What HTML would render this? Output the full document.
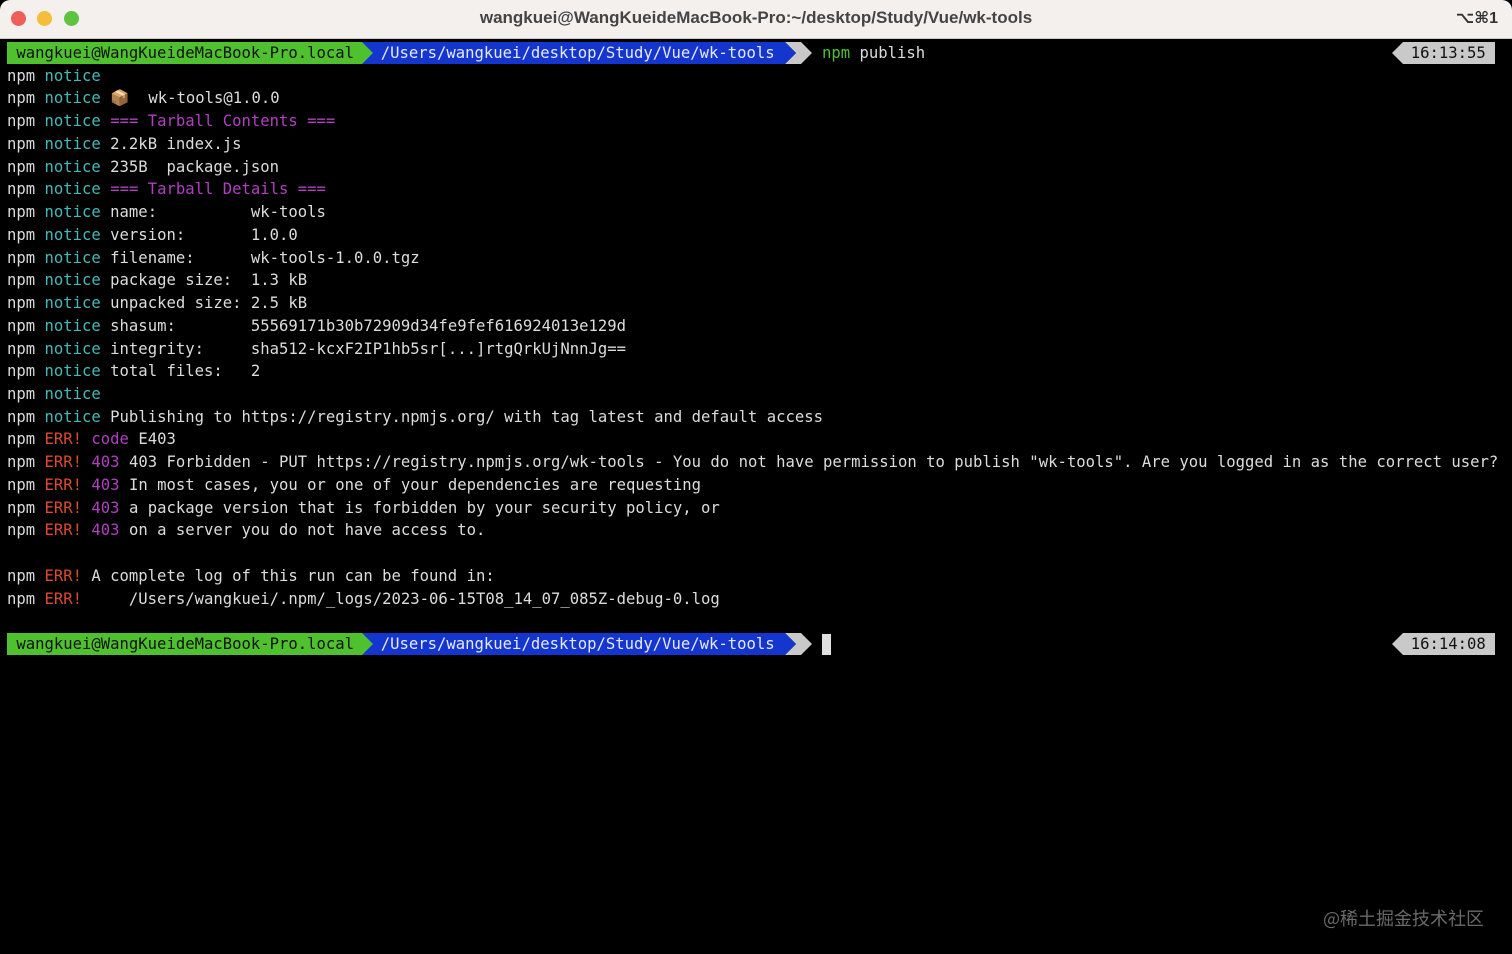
<!DOCTYPE html>
<html><head><meta charset="utf-8"><style>
html,body{margin:0;padding:0;}
body{width:1512px;height:954px;background:#000;position:relative;overflow:hidden;font-family:"DejaVu Sans Mono","Liberation Mono",monospace;}
.title{position:absolute;left:0;top:0;width:1512px;height:38px;background:#f3f0ed;border-bottom:1px solid #d0ccc8;border-radius:10px 10px 0 0;}
.tl{position:absolute;top:11px;width:15px;height:15px;border-radius:50%;}
.tt{position:absolute;left:0;width:1512px;top:8px;text-align:center;font:bold 17px "Liberation Sans",sans-serif;color:#444;}
.kb{position:absolute;right:14px;top:8px;font:bold 16px "Liberation Sans","DejaVu Sans",sans-serif;color:#333;}
pre{position:absolute;left:7px;top:42px;margin:0;font-size:15.58px;line-height:22.73px;color:#dcdcdc;font-family:"DejaVu Sans Mono","Liberation Mono",monospace;}
.n{color:#46b8b8}.e{color:#d94a30}.m{color:#b040c0}.g{color:#4fc12f}
.seg{position:absolute;height:22px;font-size:15.58px;line-height:22px;white-space:pre;}
.arr{position:absolute;width:0;height:0;border-top:11px solid transparent;border-bottom:11px solid transparent;}
.wm{position:absolute;right:28px;top:905px;color:#6a6a6a;font:18px "Noto Sans CJK SC",sans-serif;}
</style></head><body>
<div class="title">
<div class="tl" style="left:11px;background:#ee5f57"></div>
<div class="tl" style="left:37px;background:#f4bd3a"></div>
<div class="tl" style="left:64px;background:#5ec440"></div>
<div class="tt">wangkuei@WangKueideMacBook-Pro:~/desktop/Study/Vue/wk-tools</div>
<div class="kb">⌥⌘1</div>
</div>

<div class="seg" style="left:7px;top:42px;width:355px;background:#4fc12f;color:#111;"> wangkuei@WangKueideMacBook-Pro.local</div>
<div class="seg" style="left:362px;top:42px;width:423px;background:#1436cf;color:#e8e8ff;">  /Users/wangkuei/desktop/Study/Vue/wk-tools</div>
<div class="arr" style="left:362px;top:42px;border-left:11px solid #4fc12f"></div>
<div class="seg" style="left:785px;top:42px;background:#c9c9c9;clip-path:polygon(0 0,16px 0,27px 50%,16px 100%,0 100%,11px 50%);width:27px"></div>
<div class="arr" style="left:785px;top:42px;border-left:11px solid #1436cf"></div>
<div class="seg" style="left:822px;top:42px;color:#dcdcdc"><span class="g">npm</span> publish</div>
<div class="seg" style="left:1392px;top:42px;width:103px;background:#c9c9c9;color:#111;clip-path:polygon(0 50%,11px 0,103px 0,103px 100%,11px 100%)">  16:13:55</div>

<div class="seg" style="left:7px;top:633px;width:355px;background:#4fc12f;color:#111;"> wangkuei@WangKueideMacBook-Pro.local</div>
<div class="seg" style="left:362px;top:633px;width:423px;background:#1436cf;color:#e8e8ff;">  /Users/wangkuei/desktop/Study/Vue/wk-tools</div>
<div class="arr" style="left:362px;top:633px;border-left:11px solid #4fc12f"></div>
<div class="seg" style="left:785px;top:633px;background:#c9c9c9;clip-path:polygon(0 0,16px 0,27px 50%,16px 100%,0 100%,11px 50%);width:27px"></div>
<div class="arr" style="left:785px;top:633px;border-left:11px solid #1436cf"></div>
<div style="position:absolute;left:822px;top:634px;width:9px;height:21px;background:#e0e0e0"></div>
<div class="seg" style="left:1392px;top:633px;width:103px;background:#c9c9c9;color:#111;clip-path:polygon(0 50%,11px 0,103px 0,103px 100%,11px 100%)">  16:14:08</div>

<pre>

npm <span class="n">notice</span>
npm <span class="n">notice</span> 📦  wk-tools@1.0.0
npm <span class="n">notice</span> <span class="m">=== Tarball Contents ===</span>
npm <span class="n">notice</span> 2.2kB index.js
npm <span class="n">notice</span> 235B  package.json
npm <span class="n">notice</span> <span class="m">=== Tarball Details ===</span>
npm <span class="n">notice</span> name:          wk-tools
npm <span class="n">notice</span> version:       1.0.0
npm <span class="n">notice</span> filename:      wk-tools-1.0.0.tgz
npm <span class="n">notice</span> package size:  1.3 kB
npm <span class="n">notice</span> unpacked size: 2.5 kB
npm <span class="n">notice</span> shasum:        55569171b30b72909d34fe9fef616924013e129d
npm <span class="n">notice</span> integrity:     sha512-kcxF2IP1hb5sr[...]rtgQrkUjNnnJg==
npm <span class="n">notice</span> total files:   2
npm <span class="n">notice</span>
npm <span class="n">notice</span> Publishing to https://registry.npmjs.org/ with tag latest and default access
npm <span class="e">ERR!</span> <span class="m">code</span> E403
npm <span class="e">ERR!</span> <span class="m">403</span> 403 Forbidden - PUT https://registry.npmjs.org/wk-tools - You do not have permission to publish "wk-tools". Are you logged in as the correct user?
npm <span class="e">ERR!</span> <span class="m">403</span> In most cases, you or one of your dependencies are requesting
npm <span class="e">ERR!</span> <span class="m">403</span> a package version that is forbidden by your security policy, or
npm <span class="e">ERR!</span> <span class="m">403</span> on a server you do not have access to.

npm <span class="e">ERR!</span> A complete log of this run can be found in:
npm <span class="e">ERR!</span>     /Users/wangkuei/.npm/_logs/2023-06-15T08_14_07_085Z-debug-0.log
</pre>
<div class="wm">@稀土掘金技术社区</div>
</body></html>
